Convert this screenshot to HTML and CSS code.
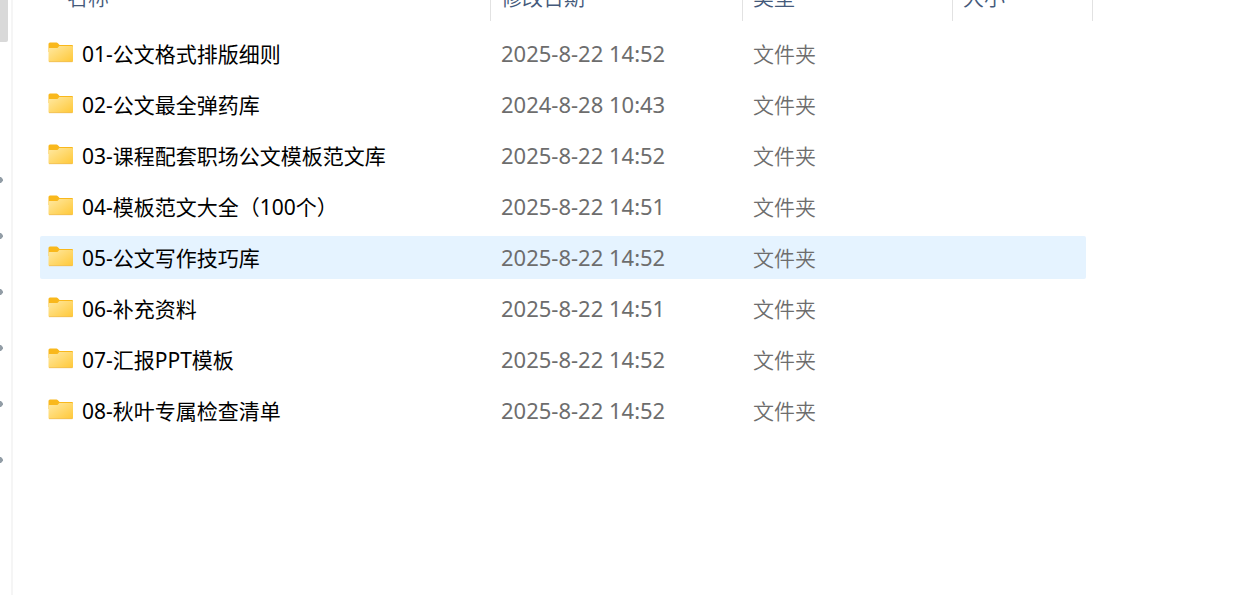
FILE: index.html
```html
<!DOCTYPE html>
<html lang="zh-CN">
<head>
<meta charset="utf-8">
<title>文件夹</title>
<link rel="stylesheet" href="styles.css">
</head>
<body>
<svg class="defs" aria-hidden="true">
  <defs>
    <linearGradient id="face" x1="0" y1="0" x2="1" y2="1"><stop offset="0" stop-color="#ffe9a3"/><stop offset="1" stop-color="#ffc837"/></linearGradient>
    <symbol id="folder" viewBox="0 0 26 21">
      <path d="M0.5 2Q0.5 0.5 2 0.5H8.5Q9.3 0.5 9.9 1.2L11.6 3H24Q25 3 25 4V10H0.5Z" fill="#f9b81c"/>
      <path d="M0.5 7Q0.5 6 1.5 6H8.5Q9.4 6 10 5.4L11.2 4H24Q25 4 25 5V19Q25 20 24 20H1.5Q0.5 20 0.5 19Z" fill="url(#face)"/>
      <path d="M1 19.7H24.5" stroke="#edba55" stroke-width="0.7"/>
    </symbol>
    <symbol id="pin" viewBox="0 0 4 6"><path d="M0 0H1L3 2.2V3.8L1 6H0Z" fill="#929da6"/></symbol>
  </defs>
</svg>
<div class="window">
  <aside class="nav">
    <div class="thumb"></div>
    <ul class="pins">
      <li><svg><use href="#pin"/></svg></li>
      <li><svg><use href="#pin"/></svg></li>
      <li><svg><use href="#pin"/></svg></li>
      <li><svg><use href="#pin"/></svg></li>
      <li><svg><use href="#pin"/></svg></li>
      <li><svg><use href="#pin"/></svg></li>
    </ul>
  </aside>
  <main class="content">
    <table class="files">
      <thead><tr><th>名称</th><th>修改日期</th><th>类型</th><th>大小</th></tr></thead>
      <tbody>
        <tr><td class="name"><svg><use href="#folder"/></svg>01-公文格式排版细则</td><td class="date">2025-8-22 14:52</td><td>文件夹</td><td></td></tr>
        <tr><td class="name"><svg><use href="#folder"/></svg>02-公文最全弹药库</td><td class="date">2024-8-28 10:43</td><td>文件夹</td><td></td></tr>
        <tr><td class="name"><svg><use href="#folder"/></svg>03-课程配套职场公文模板范文库</td><td class="date">2025-8-22 14:52</td><td>文件夹</td><td></td></tr>
        <tr><td class="name"><svg><use href="#folder"/></svg>04-模板范文大全（100个）</td><td class="date">2025-8-22 14:51</td><td>文件夹</td><td></td></tr>
        <tr class="hover"><td class="name"><svg><use href="#folder"/></svg>05-公文写作技巧库</td><td class="date">2025-8-22 14:52</td><td>文件夹</td><td></td></tr>
        <tr><td class="name"><svg><use href="#folder"/></svg>06-补充资料</td><td class="date">2025-8-22 14:51</td><td>文件夹</td><td></td></tr>
        <tr><td class="name"><svg><use href="#folder"/></svg>07-汇报PPT模板</td><td class="date">2025-8-22 14:52</td><td>文件夹</td><td></td></tr>
        <tr><td class="name"><svg><use href="#folder"/></svg>08-秋叶专属检查清单</td><td class="date">2025-8-22 14:52</td><td>文件夹</td><td></td></tr>
      </tbody>
    </table>
  </main>
</div>
</body>
</html>
```
FILE: styles.css
```css
* { box-sizing: border-box; }
body {
  margin: 0;
  background: #fff;
  color: #000;
  font: 400 21px/30px "Noto Sans", "Noto Sans CJK SC", sans-serif;
}
.defs { position: absolute; width: 0; height: 0; }
.window { display: flex; min-height: 100vh; overflow: hidden; }
.nav { flex: none; width: 13px; border-right: 2px solid #f5f5f5; }
.thumb { width: 8px; height: 42px; background: #d9d9d9; border-bottom-right-radius: 2px; }
.pins { list-style: none; margin: 0; padding: 110px 0 0; }
.pins li { display: flex; align-items: center; height: 56px; }
.pins svg { width: 4px; height: 6px; }
.content { flex: 1; min-width: 0; padding-left: 27px; }
/* the header row is partly scrolled out of view */
.files { display: block; margin-top: -25px; }
.files thead, .files tbody { display: block; }
.files tr { display: grid; grid-template-columns: 451px 252px 210px 140px; }
.files th {
  height: 46px;
  padding: 0 10px;
  border-right: 1px solid #e2e2e2;
  color: #44597a;
  font-weight: 350;
  text-align: left;
  line-height: 44px;
}
.files th:first-child { padding-left: 27px; }
.files tbody { padding-top: 11px; }
.files tbody tr {
  grid-template-columns: 451px 252px 210px 133px;
  align-items: center;
  width: 1046px;
  height: 43px;
  margin-bottom: 8px;
  border-radius: 2px;
}
.files tbody tr.hover { background: #e5f3ff; }
.files td { padding: 0 10px; color: #6d6d6d; font-weight: 350; white-space: nowrap; }
.files td.name {
  display: flex;
  align-items: center;
  gap: 8px;
  padding: 0 0 0 8px;
  color: #000;
  font-weight: 400;
}
.files td.name svg { width: 26px; height: 21px; margin-bottom: 2px; }
.files td.date { padding-bottom: 2px; font-size: 22px; font-weight: 400; }
```
